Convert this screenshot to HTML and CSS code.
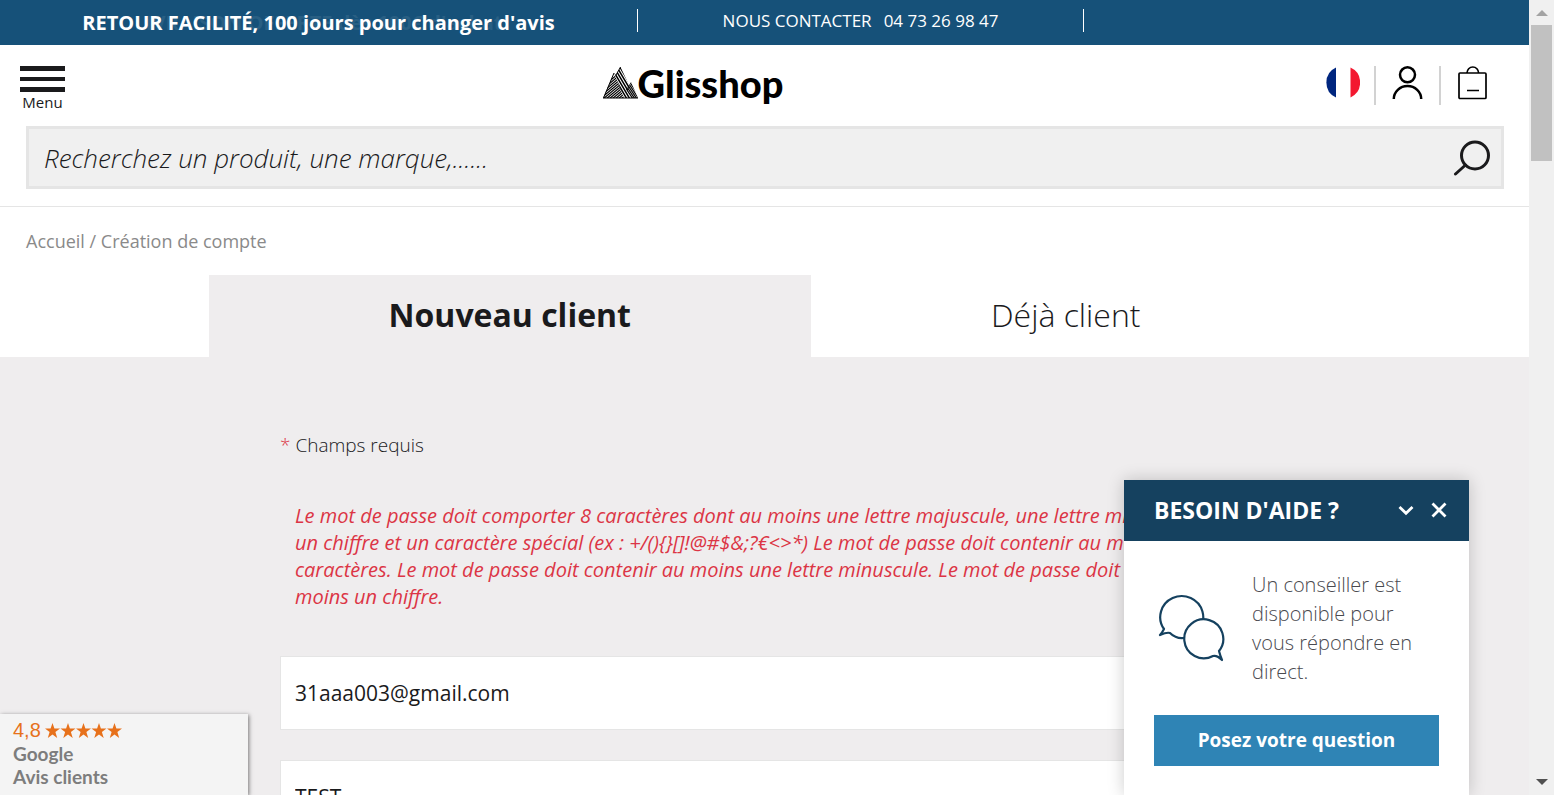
FILE: index.html
```html
<!DOCTYPE html>
<html lang="fr">
<head>
<meta charset="utf-8">
<title>Création de compte - Glisshop</title>
<link rel="stylesheet" href="styles.css">
</head>
<body>
<div class="window">
  <div class="page">
    <div class="topbar">
      <div class="topbar-cell promo">
        <span class="promo-next" aria-hidden="true">LIVRAISON OFFERTE dès 100€ d'achat</span>
        <strong class="promo-current">RETOUR FACILITÉ, 100 jours pour changer d'avis</strong>
      </div>
      <div class="topbar-cell contact"><span>NOUS CONTACTER</span><a href="tel:0473269847">04 73 26 98 47</a></div>
      <div class="topbar-cell"></div>
    </div>

    <header class="header">
      <div class="header-row">
        <button class="menu" type="button">
          <span class="bar"></span><span class="bar bar-mid"></span><span class="bar"></span>
          <span class="menu-label">Menu</span>
        </button>
        <a class="logo" href="#" aria-label="Glisshop">
          <svg width="35" height="32" viewBox="0 0 35 32" aria-hidden="true">
            <defs>
              <clipPath id="west"><path d="M0 31 11 6l10 25z"/></clipPath>
              <clipPath id="summit"><path d="M11 6l2 2 4.500-8L27 20l-3 4 4 7h-7z"/></clipPath>
              <clipPath id="east"><path d="M23 23l5-8 7 16h-8z"/></clipPath>
            </defs>
            <g fill="none" stroke="#000" stroke-width="1.200">
              <path clip-path="url(#west)" d="M0 22 24 2M0 24.500l24-20M0 27l24-20M0 29.500l24-20M0 32l24-20M0 34.500l24-20M0 37l24-20M0 39.500l24-20M0 42l24-20M0 44.500l24-20M0 47l24-20M0 19.500l24-20"/>
              <path stroke-width="1.500" clip-path="url(#summit)" d="M8-10l26 44M8-5l26 44M8 0l26 44M8 5l26 44M8-15l26 44M8-20l26 44M8-25l26 44M8-30l26 44"/>
              <path clip-path="url(#east)" d="M20 8l16 24M20 11l16 24M20 14l16 24M20 17l16 24M20 5l16 24M20 2l16 24"/>
              <path stroke-width="1" d="M0 31h35M.5 31 11 6M13 8l4.500-8"/>
            </g>
          </svg>
          <span class="logo-text">Glisshop</span>
        </a>
        <nav class="tools">
          <a class="tool" href="#" aria-label="Langue">
            <svg width="36" height="34" viewBox="0 0 36 34"><path d="M12 1.500v30a16.500 16.500 0 0 1 0-30z" fill="#00267f"/><path d="M26.500 1.500v30a16.500 16.500 0 0 0 0-30z" fill="#f31830"/></svg>
          </a>
          <a class="tool" href="#" aria-label="Mon compte">
            <svg width="32" height="34" viewBox="0 0 32 34" fill="none" stroke="#000" stroke-width="2.500"><circle cx="15.500" cy="8.800" r="7.500"/><path d="M1.800 33a13.700 13 0 0 1 27.400 0"/></svg>
          </a>
          <a class="tool" href="#" aria-label="Panier">
            <svg width="30" height="34" viewBox="0 0 30 34" fill="none" stroke="#000" stroke-width="1.700"><rect x="1" y="7" width="27" height="25.500" rx="1"/><path d="M9 7a5.800 6 0 0 1 11.600 0M9 24.500h12"/></svg>
          </a>
        </nav>
      </div>
      <form class="search">
        <input class="search-input" type="text" aria-label="Rechercher" placeholder="Recherchez un produit, une marque,......">
        <button class="search-btn" type="button" aria-label="Lancer la recherche">
          <svg width="38" height="36" viewBox="0 0 38 36" fill="none" stroke="#1a1a1c" stroke-width="3"><circle cx="22" cy="15.500" r="13.500"/><path d="M12.500 25 2.500 34" stroke-linecap="round"/></svg>
        </button>
      </form>
    </header>

    <nav class="crumbs"><a href="#">Accueil</a> / <span>Création de compte</span></nav>

    <div class="tabs">
      <button class="tab tab-active" type="button">Nouveau client</button>
      <button class="tab" type="button">Déjà client</button>
    </div>

    <main class="panel">
      <form class="account">
        <p class="required"><span class="star">*</span> Champs requis</p>
        <p class="error">Le mot de passe doit comporter 8 caractères dont au moins une lettre majuscule, une lettre minuscule,<br>un chiffre et un caractère spécial (ex : +/(){}[]!@#$&amp;;?€&lt;&gt;*) Le mot de passe doit contenir au moins 8<br>caractères. Le mot de passe doit contenir au moins une lettre minuscule. Le mot de passe doit contenir au<br>moins un chiffre.</p>
        <input class="field" type="email" aria-label="E-mail" value="31aaa003@gmail.com">
        <input class="field" type="text" aria-label="Nom" value="TEST">
      </form>
    </main>

    <aside class="reviews">
      <div class="score">4,8
        <svg width="77" height="16" viewBox="0 0 77 16" fill="#e7711b" aria-hidden="true"><defs><path id="star" d="M7.500 1 9.400 6.600H15L10.400 10.100 12.200 16 7.500 12.500 2.800 16 4.600 10.100 0 6.600h5.600z"/></defs><use href="#star"/><use href="#star" x="15.500"/><use href="#star" x="31"/><use href="#star" x="46.500"/><use href="#star" x="62"/></svg>
      </div>
      <div class="reviews-name">Google</div>
      <div class="reviews-name">Avis clients</div>
    </aside>

    <section class="chat" aria-label="Besoin d'aide">
      <div class="chat-head">
        <h2 class="chat-title">BESOIN D'AIDE ?</h2>
        <button class="chat-icon" type="button" aria-label="Réduire"><svg width="16" height="16" viewBox="0 0 16 16" fill="none" stroke="#fff" stroke-width="2.800"><path d="M1.500 5 8 11.200 14.500 5"/></svg></button>
        <button class="chat-icon" type="button" aria-label="Fermer"><svg width="16" height="16" viewBox="0 0 16 16" fill="none" stroke="#fff" stroke-width="2.800"><path d="M1.500 1.500l13 13M14.500 1.500l-13 13"/></svg></button>
      </div>
      <div class="chat-body">
        <div class="chat-info">
          <svg width="68" height="68" viewBox="0 0 68 68" fill="#fff" stroke="#15415f" stroke-width="2.200" stroke-linejoin="round"><path d="M6 35a21.500 21 0 1 1 20 9q-8 1-14-5-3-1-10 2 2-2 4-6z"/><path d="M61 57a19.500 19.500 0 1 0-6 5q4-1 9 4-2-5-3-9z"/></svg>
          <p class="chat-text">Un conseiller est disponible pour vous répondre en direct.</p>
        </div>
        <button class="ask" type="button">Posez votre question</button>
      </div>
    </section>
  </div>
  <div class="scrollbar" aria-hidden="true"><span class="arrow arrow-up"></span><span class="thumb"></span><span class="arrow arrow-down"></span></div>
</div>
</body>
</html>
```
FILE: styles.css
```css
* { box-sizing: border-box; }
body { margin: 0; font-family: "Open Sans", "Noto Sans", sans-serif; color: #1a1a1c; background: #fff; }
a { color: inherit; text-decoration: none; }
button, input { font: inherit; color: inherit; border: 0; padding: 0; border-radius: 0; background: none; }
button { cursor: pointer; }
svg { display: block; flex: none; }
p, h2 { margin: 0; }

.window { display: flex; height: 100vh; overflow: hidden; }
.page { flex: 1; min-width: 0; position: relative; overflow: hidden; display: flex; flex-direction: column; }

.topbar { display: grid; grid-template-columns: 10fr 7fr 7fr; align-items: center; height: 45px; flex: none; background: #165179; color: #fff; font-size: 17px; padding-bottom: 4px; }
.topbar-cell { display: flex; justify-content: center; align-items: center; gap: 12px; height: 23px; white-space: nowrap; }
.topbar-cell + .topbar-cell { border-left: 1px solid #fff; }
.promo { position: relative; font-size: 20px; padding-top: 4px; }
.promo-next { position: absolute; opacity: 0.08; font-weight: 700; }

.header { flex: none; border-bottom: 1px solid #e5e5e5; padding: 18px 25px 17px 26px; }
.header-row { display: grid; grid-template-columns: 4fr auto 5fr; align-items: start; height: 63px; }
.menu { display: flex; flex-direction: column; justify-self: start; width: 45px; margin-left: -6px; padding-top: 3px; }
.bar { height: 5px; width: 100%; background: #1a1a1c; margin-bottom: 6px; }
.bar-mid { height: 4px; }
.menu-label { font-size: 15px; font-weight: 500; line-height: 20px; margin-top: -6px; align-self: center; }
.logo { display: flex; align-items: flex-start; padding-top: 4px; color: #000; }
.logo-text { font-family: Lato, sans-serif; font-weight: 900; font-size: 38px; line-height: 32px; }
.tools { display: flex; justify-self: end; height: 39px; margin-top: 3px; }
.tool { width: 65px; display: flex; justify-content: center; }
.tool + .tool { border-left: 2px solid #d2d2d2; }

.search { display: flex; align-items: center; height: 63px; border: 3px solid #e5e5e5; background: #f0f0f0; padding: 0 10px 0 15px; }
.search-input { flex: 1; min-width: 0; font-size: 26px; font-weight: 350; font-style: italic; height: 50px; }
.search-input::placeholder { color: #1a1a1c; opacity: 1; }

.crumbs { flex: none; padding: 20px 26px; font-size: 18px; line-height: 28px; color: #8a8a8a; }

.tabs { display: flex; justify-content: center; flex: none; }
.tab { padding: 0 180px 4px; font-size: 32px; font-weight: 350; height: 82px; white-space: nowrap; }
.tab-active { background: #efedee; font-weight: 700; }

.panel { flex: 1; background: #efedee; padding: 74px 280px 0; }
.account { display: flex; flex-direction: column; }
.required { font-size: 19px; font-weight: 350; line-height: 28px; }
.star { color: #dc3545; }
.error { margin: 43px 0 46px 15px; font-size: 20px; line-height: 27px; font-style: italic; font-weight: 500; color: #dc3545; white-space: nowrap; }
.field { height: 74px; flex: none; border: 1px solid #e5e5e5; background: #fff; padding: 0 14px; font-size: 21px; margin-bottom: 30px; }

.reviews { position: absolute; left: 0; bottom: 0; width: 248px; padding: 4px 13px 7px; background: #f4f4f4; box-shadow: 1px 1px 4px rgba(0, 0, 0, 0.5); font-family: Lato, sans-serif; color: #7d7d7d; }
.score { display: flex; align-items: center; gap: 4px; font-family: "Liberation Sans", Arial, sans-serif; font-size: 20px; line-height: 24px; color: #e7711b; }
.reviews-name { font-size: 19px; line-height: 23px; font-weight: 700; }

.chat { position: absolute; right: 60px; bottom: 0; width: 345px; background: #fff; box-shadow: 0 0 16px rgba(0, 0, 0, 0.2); }
.chat-head { display: flex; align-items: center; gap: 17px; height: 61px; padding: 0 22px 2px 30px; background: #15415f; color: #fff; }
.chat-title { flex: 1; font-size: 23px; font-weight: 700; white-space: nowrap; }
.chat-body { padding: 29px 30px; }
.chat-info { display: flex; align-items: center; gap: 26px; padding-left: 4px; }
.chat-text { font-size: 20px; font-weight: 350; line-height: 29px; color: #4a4a4f; }
.ask { display: block; width: 100%; height: 51px; margin-top: 29px; padding-bottom: 2px; background: #2f84b5; color: #fff; font-size: 19px; font-weight: 700; }

.scrollbar { flex: none; width: 25px; display: flex; flex-direction: column; align-items: center; background: #f0f0f0; padding: 10px 0; }
.arrow { border: 6px solid transparent; }
.arrow-up { border-top: 0; border-bottom-color: #a3a3a3; }
.thumb { width: 21px; height: 136px; margin-top: 9px; background: #c1c1c1; }
.arrow-down { border-bottom: 0; border-top-color: #505050; margin-top: auto; }
```
